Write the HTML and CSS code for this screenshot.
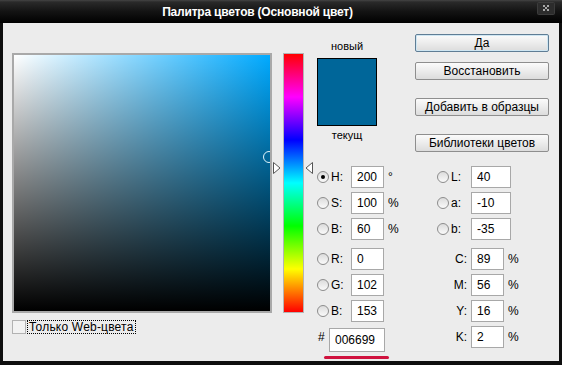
FILE: index.html
```html
<!DOCTYPE html>
<html lang="ru">
<head>
  <meta charset="UTF-8" />
  <meta name="viewport" content="width=device-width, initial-scale=1.0"/>
  <title>Палитра цветов</title>
  <link rel="stylesheet" href="styles.css">
</head>
<body>
  <div class="window">
    <div class="titlebar">
      <div class="title">Палитра цветов (Основной цвет)</div>
      <button class="close" title="Закрыть">
        <svg width="18" height="13" viewBox="0 0 18 13">
          <rect x="0.5" y="0.5" width="17" height="12" rx="1" fill="#2c2c2c" stroke="#3c3c3c"/>
          <g fill="#a8a8a8">
            <rect x="6" y="3" width="2" height="2"/>
            <rect x="10" y="3" width="2" height="2"/>
            <rect x="8" y="5" width="2" height="2"/>
            <rect x="6" y="7" width="2" height="2"/>
            <rect x="10" y="7" width="2" height="2"/>
          </g>
        </svg>
      </button>
    </div>

    <div class="content">
      <div class="picker">
        <div class="field">
          <div class="field-marker"></div>
        </div>
        <label class="webonly">
          <span class="check"></span>
          <span class="check-text">Только Web-цвета</span>
        </label>
      </div>

      <div class="hue">
        <div class="hue-bar"></div>
        <svg class="hue-arrow hue-arrow-left" width="8" height="12" viewBox="0 0 8 12">
          <polygon points="0.5,0.5 7,6 0.5,11.5" fill="#fff" stroke="#555"/>
        </svg>
        <svg class="hue-arrow hue-arrow-right" width="8" height="12" viewBox="0 0 8 12">
          <polygon points="7.5,0.5 1,6 7.5,11.5" fill="#fff" stroke="#555"/>
        </svg>
      </div>

      <div class="side">
        <div class="side-top">
          <div class="preview">
            <div class="caption">новый</div>
            <div class="swatch"></div>
            <div class="caption caption-bottom">текущ</div>
          </div>
          <div class="buttons">
            <button class="btn btn-default">Да</button>
            <button class="btn">Восстановить</button>
            <button class="btn btn-spaced">Добавить в образцы</button>
            <button class="btn btn-spaced">Библиотеки цветов</button>
          </div>
        </div>

        <div class="fields">
          <div class="row"><span class="radio checked"></span><span class="lbl">H:</span><input class="num" value="200"><span class="unit">°</span></div>
          <div class="row"><span class="radio"></span><span class="lbl">L:</span><input class="num wide" value="40"></div>

          <div class="row"><span class="radio"></span><span class="lbl">S:</span><input class="num" value="100"><span class="unit">%</span></div>
          <div class="row"><span class="radio"></span><span class="lbl">a:</span><input class="num wide" value="-10"></div>

          <div class="row"><span class="radio"></span><span class="lbl">B:</span><input class="num" value="60"><span class="unit">%</span></div>
          <div class="row"><span class="radio"></span><span class="lbl">b:</span><input class="num wide" value="-35"></div>

          <div class="row row-gap"><span class="radio"></span><span class="lbl">R:</span><input class="num" value="0"></div>
          <div class="row row-gap"><span class="lbl lbl-right">C:</span><input class="num" value="89"><span class="unit">%</span></div>

          <div class="row"><span class="radio"></span><span class="lbl">G:</span><input class="num" value="102"></div>
          <div class="row"><span class="lbl lbl-right">M:</span><input class="num" value="56"><span class="unit">%</span></div>

          <div class="row"><span class="radio"></span><span class="lbl">B:</span><input class="num" value="153"></div>
          <div class="row"><span class="lbl lbl-right">Y:</span><input class="num" value="16"><span class="unit">%</span></div>

          <div class="row row-hex">
            <span class="hash">#</span><input class="num hex" value="006699">
            <div class="underline"></div>
          </div>
          <div class="row"><span class="lbl lbl-right">K:</span><input class="num" value="2"><span class="unit">%</span></div>
        </div>
      </div>
    </div>
  </div>
</body>
</html>
```

FILE: styles.css
```css
body {
  margin: 0;
  font-family: "Liberation Sans", Arial, sans-serif;
  font-size: 12px;
  color: #000;
  background: #000;
}

.window {
  width: 562px;
  height: 365px;
  background: #0e0e0e;
  display: flex;
  flex-direction: column;
}

/* title bar */
.titlebar {
  height: 23px;
  display: flex;
  align-items: center;
  background: linear-gradient(#444 0, #2a2a2a 2px, #141414 11px, #000 100%);
}

.title {
  flex: 1;
  text-align: center;
  padding-right: 22px;
  color: #fff;
  font-weight: bold;
  font-size: 12px;
  letter-spacing: -0.2px;
}

.close {
  align-self: flex-start;
  margin: 2px 7px 0 0;
  padding: 0;
  border: none;
  background: none;
  width: 18px;
  height: 13px;
  display: flex;
}

/* dialog body */
.content {
  flex: 1;
  margin: 0 3px 4px 3px;
  background: #ececec;
  display: flex;
  align-items: flex-start;
  padding: 11px 0 0 9px;
}

.picker {
  margin-top: 19px;
  display: flex;
  flex-direction: column;
}

.field {
  position: relative;
  width: 256px;
  height: 256px;
  border: 2px solid #a9a9a9;
  overflow: hidden;
  background:
    linear-gradient(to top, #000, rgba(0,0,0,0)),
    linear-gradient(to right, #fff, #00aaff);
}

.field-marker {
  position: absolute;
  left: 249px;
  top: 96px;
  width: 10px;
  height: 10px;
  border: 1px solid #dff4fb;
  border-radius: 50%;
}

.webonly {
  margin-top: 7px;
  display: flex;
  align-items: center;
}

.check {
  width: 12px;
  height: 12px;
  border: 1px solid #b2b2b2;
  background: #f2f2f2;
  margin-right: 2px;
}

.check-text {
  outline: 1px dotted #000;
  line-height: 12px;
  padding: 0 1px;
  letter-spacing: 0.2px;
}

/* hue slider */
.hue {
  position: relative;
  margin: 19px 0 0 11px;
}

.hue-bar {
  width: 19px;
  height: 258px;
  border: 1px solid #b4b4b4;
  background: linear-gradient(to bottom, #f00, #f0f, #00f, #0ff, #0f0, #ff0, #f00);
}

.hue-arrow {
  position: absolute;
  top: 109px;
}

.hue-arrow-left {
  left: -10px;
}

.hue-arrow-right {
  left: 22px;
}

/* right side */
.side {
  margin-left: 13px;
  display: flex;
  flex-direction: column;
}

.side-top {
  display: flex;
  align-items: flex-start;
}

.preview {
  width: 60px;
  display: flex;
  flex-direction: column;
  align-items: center;
}

.caption {
  margin-top: 6px;
  line-height: 12px;
  font-size: 11px;
}

.caption-bottom {
  margin-top: 3px;
}

.swatch {
  margin-top: 6px;
  width: 58px;
  height: 66px;
  border: 1px solid #000;
  background: #006699;
}

.buttons {
  margin-left: 38px;
  display: flex;
  flex-direction: column;
  gap: 10px;
}

.btn {
  width: 134px;
  height: 18px;
  padding: 0;
  font-family: inherit;
  font-size: 12px;
  color: #000;
  border: 1px solid #8e8e8e;
  border-radius: 2px;
  background: linear-gradient(#fbfbfb, #ececec 50%, #dcdcdc);
}

.btn-default {
  border-color: #5f7d95;
  box-shadow: inset 0 0 0 1px #cfe6f2;
}

.btn-spaced {
  margin-top: 8px;
}

/* value fields */
.fields {
  margin-top: 14px;
  display: grid;
  grid-template-columns: 120px 120px;
  grid-template-rows: 22px 22px 22px 26px 22px 22px 22px;
  row-gap: 4px;
}

.row {
  display: flex;
  align-items: center;
  position: relative;
}

.row-gap {
  padding-top: 4px;
}

.radio {
  width: 10px;
  height: 10px;
  border: 1px solid #8c8c8c;
  border-radius: 50%;
  background: linear-gradient(#dcdcdc, #fafafa);
  margin-right: 2px;
  display: flex;
  align-items: center;
  justify-content: center;
}

.radio.checked::after {
  content: "";
  width: 4px;
  height: 4px;
  border-radius: 50%;
  background: #000;
}

.lbl {
  width: 20px;
}

.lbl-right {
  width: 30px;
  padding-right: 4px;
  text-align: right;
}

.num {
  box-sizing: border-box;
  width: 33px;
  height: 22px;
  padding: 0 0 0 5px;
  border: 1px solid #a8a8a8;
  background: #fff;
  font-family: inherit;
  font-size: 12px;
  color: #000;
}

.num.wide {
  width: 40px;
}

.unit {
  margin-left: 4px;
}

.hash {
  width: 12px;
  padding-left: 1px;
  box-sizing: border-box;
}

.num.hex {
  width: 56px;
  height: 24px;
  margin-top: 6px;
}

.underline {
  position: absolute;
  left: 7px;
  top: 30px;
  width: 65px;
  height: 3px;
  border-radius: 2px;
  background: #d0123e;
}
```
